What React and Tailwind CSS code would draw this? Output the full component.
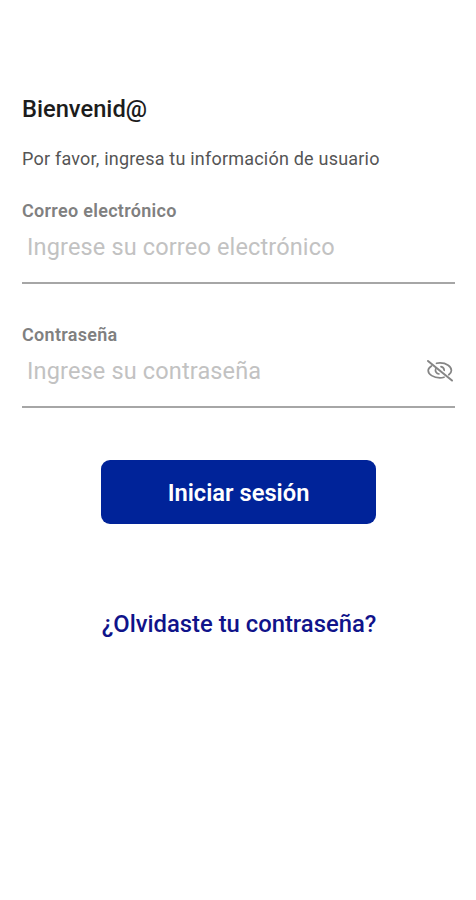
import { useState } from 'react';

const Field = ({ id, label, type, placeholder, children }) => (
  <div className="border-b-2 border-[#a6a6a6]">
    <label htmlFor={id} className="block text-[18px] leading-[22px] font-semibold tracking-[0.3px] text-[#808080]">{label}</label>
    <div className="flex items-center justify-between pl-[5px] pr-px pt-[11px] pb-[19px]">
      <input
        id={id}
        type={type}
        placeholder={placeholder}
        className="min-w-0 flex-1 h-[30px] text-[23.5px] tracking-[0.15px] text-[#333333] placeholder:text-[#c2c2c2] outline-none"
      />
      {children}
    </div>
  </div>
);

const EyeOff = () => (
  <svg width="28" height="24" viewBox="0 0 28 24" fill="none" stroke="#858585" strokeWidth="1.7" strokeLinecap="round">
    <path d="M5.500 7C3.400 8.400 2.200 10 2.200 11.500C2.200 15.500 7.500 18.800 14 18.800C15.400 18.800 16.700 18.600 18 18.200" />
    <path d="M10.500 4.300C11.600 4 12.800 3.900 14 3.900C20.500 3.900 25.400 7.500 25.400 11.500C25.400 13.100 24.400 14.600 22.800 15.800" />
    <path d="M9.700 9.800C8.800 12.300 10.600 14.700 13 15" />
    <path d="M15 7.700C16.900 8.100 18.100 9.600 18.200 11.300" />
    <path d="M2 2L26 21.500" strokeWidth="2" />
  </svg>
);

export default function App() {
  const [visible, setVisible] = useState(false);

  return (
    <main className="min-h-[900px] bg-white pl-[22px] pr-[21px] pt-[95px] font-['Roboto',sans-serif]">
      <h1 className="text-[23.7px] leading-[28px] font-medium text-[#1c1c1c]">Bienvenid@</h1>
      <p className="mt-[25px] text-[18px] leading-[22px] tracking-[0.21px] text-[#555555]">Por favor, ingresa tu información de usuario</p>

      <form onSubmit={(e) => e.preventDefault()}>
        <div className="mt-[30px] space-y-[40px]">
          <Field id="email" label="Correo electrónico" type="text" placeholder="Ingrese su correo electrónico" />
          <Field id="password" label="Contraseña" type={visible ? 'text' : 'password'} placeholder="Ingrese su contraseña">
            <button type="button" aria-label="Mostrar contraseña" onClick={() => setVisible(!visible)} className="-mt-[3px]">
              <EyeOff />
            </button>
          </Field>
        </div>
        <button type="submit" className="mx-auto mt-[52px] block h-[64px] w-[275px] rounded-[9px] bg-[#002399] pt-[3px] text-[23.7px] font-semibold text-white">
          Iniciar sesión
        </button>
      </form>
      <a href="#" className="mt-[85px] block pl-px text-center text-[23.8px] leading-[30px] font-medium text-[#10138a]">¿Olvidaste tu contraseña?</a>
    </main>
  );
}
